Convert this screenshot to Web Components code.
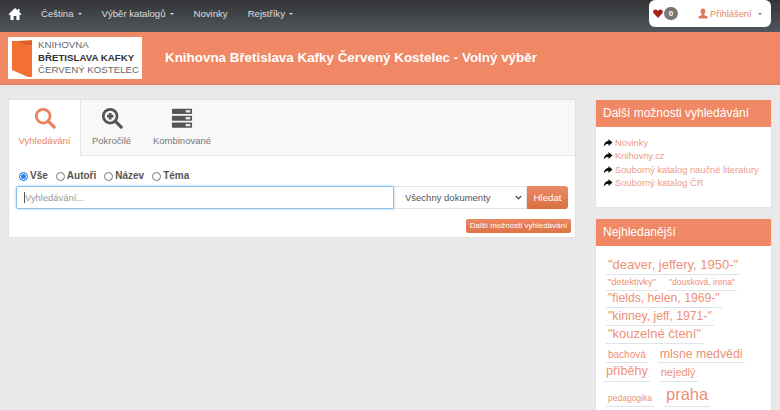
<!DOCTYPE html>
<html lang="cs"><head><meta charset="utf-8"><title>Knihovna</title>
<style>
html,body{margin:0;padding:0;height:410px;overflow:hidden;background:#e9e9e9;font-family:"Liberation Sans",Arial,sans-serif;font-size:10px;color:#555}
x-page{display:block}
</style></head><body>
<template id="t-nav"><style>
:host{display:flex;height:32px;align-items:flex-start;background:linear-gradient(#343537,#50565c);color:#ddd;font-size:9.6px}
.home{width:14px;height:14px;margin:7px 0 0 8px;flex:none}
nav{display:flex;margin-left:19px;line-height:14px;padding-top:7px}
nav span{margin-right:20px;white-space:nowrap}
.c{display:inline-block;width:0;height:0;border:2.5px solid transparent;border-top-color:currentColor;border-bottom:0;margin-left:4px;vertical-align:2px}
.box{margin-left:auto;margin-right:9px;width:122px;height:27px;background:#fff;border-radius:6px;display:flex;align-items:center;box-sizing:border-box;padding:0 0 0 4px;color:#e9866b;font-size:9.4px}
.b{background:#777;color:#fff;border-radius:8px;font-size:8px;font-weight:bold;width:14px;height:13px;line-height:13px;text-align:center;margin-left:1px}
.user{display:flex;align-items:center;margin-left:20px;gap:2px}
.user .c{color:#777;margin-left:4px;vertical-align:0}
</style>
<svg class="home" viewBox="0 0 14 14"><path fill="#fff" d="M7 1 L0.5 7.2 L1.6 8.2 L2.5 7.5 V13 H5.6 V9 H8.4 V13 H11.5 V7.5 L12.4 8.2 L13.5 7.2 L11.5 5.2 V2 H9.8 V3.6Z"/></svg>
<nav><span>Čeština<i class="c"></i></span><span>Výběr katalogů<i class="c"></i></span><span>Novinky</span><span>Rejstříky<i class="c"></i></span></nav>
<div class="box"><svg width="10" height="9" viewBox="0 0 10 9"><path fill="#a3231f" d="M5 9 L.8 4.6 C-.6 3 .2.4 2.5.4 3.7.4 4.5 1 5 1.9 5.5 1 6.3.4 7.5.4 9.8.4 10.6 3 9.2 4.6Z"/></svg><span class="b">0</span>
<span class="user"><svg width="10" height="11" viewBox="0 0 10 11"><path fill="#e0785c" d="M5 .5C6.7.5 7.5 1.8 7.3 3.4 7.2 4.7 6.6 5.700 6.2 6.100V7L9.500 8.500V10.500H.5V8.500L3.800 7V6.100C3.400 5.700 2.800 4.700 2.700 3.400 2.500 1.800 3.300.5 5 .5Z"/></svg><span>Přihlášení</span><i class="c"></i></span></div>
</template>

<template id="t-head"><style>
:host{display:flex;align-items:center;height:53px;box-sizing:border-box;background:#f08866;border-bottom:1px solid #e57f5f;color:#fff;font-weight:bold;font-size:13.4px;padding:5px 0 5px 8px}
.logo{width:134px;height:42px;background:#fff;flex:none;display:flex;align-items:center;gap:6px;padding-left:4px;box-sizing:border-box;color:#666;font-weight:normal;font-size:9.7px;line-height:12.5px}
.logo b{color:#333;font-size:9.7px}
h1{font:inherit;margin:0 0 0 23px;padding-bottom:1px}
</style>
<div class="logo"><svg width="20" height="37" viewBox="0 0 20 37"><path fill="#f36f32" d="M0 1H5L20 0V37H16L0 30Z"/><path fill="#d9602c" d="M5 1 H20 V5 L13 5Z"/></svg><div>KNIHOVNA<br><b>BŘETISLAVA KAFKY</b><br>ČERVENÝ KOSTELEC</div></div>
<h1><slot></slot></h1>
</template>

<template id="t-search"><style>
:host{display:block;width:566px;height:137px;background:#fff;box-sizing:border-box;box-shadow:0 0 1px rgba(0,0,0,.2);flex:none;color:#555}
.tabs{display:flex;height:55px;background:#f8f8f8;border-bottom:1px solid #e6e6e6}
.tab{display:flex;flex-direction:column;align-items:center;color:#777;font-size:9.5px;padding-top:7px;box-sizing:border-box}
.tab svg{width:22px;height:22px;margin-bottom:5px;display:block}
.tab span{line-height:14px;white-space:nowrap}
.on{background:#fff;color:#ea8467;margin-bottom:-1px;width:72px;border-right:1px solid #e6e6e6}
.tab2{width:61px}
.tab3{width:80px}
.radios{display:flex;padding:13px 0 0 10px;font-weight:bold;font-size:10px;line-height:14px;height:14px;gap:8px}
.radios label{display:flex;align-items:center;gap:2px}
.r{width:7px;height:7px;border-radius:50%;border:1px solid #767676;background:#fff;display:inline-block}
.r.c{background:#2e7ee6;border-color:#2e7ee6;box-shadow:inset 0 0 0 1px #fff}
.form{display:flex;margin:3px 0 0 7px;height:23px}
.inp{width:378px;box-sizing:border-box;border:1px solid #8fc0ea;border-radius:2px 0 0 2px;box-shadow:0 0 3px rgba(102,175,233,.6);color:#999;font-size:9.4px;line-height:21px;padding-left:7px;display:flex;align-items:center}
.inp i{width:1px;height:11px;background:#555;display:block}
.sel{width:133px;box-sizing:border-box;border:1px solid #e4e4e4;border-left:0;font-size:9.5px;color:#555;display:flex;align-items:center;padding-left:11px;justify-content:space-between;padding-right:4px}
.sel svg{width:7px;height:5px}
.btn{width:41px;background:linear-gradient(#ec8a66,#d9703f);color:#fff;border-radius:0 3px 3px 0;display:flex;align-items:center;justify-content:center;font-size:9.7px;height:23px}
.more{display:flex;justify-content:flex-end;margin:10px 4px 0 0}
.more span{background:linear-gradient(#ec8762,#dc7446);color:#fff;border-radius:2px;font-size:8px;line-height:14px;height:14px;width:105px;text-align:center;white-space:nowrap}
</style>
<div class="tabs">
<div class="tab on"><svg viewBox="0 0 24 24"><circle cx="10" cy="10" r="7.5" fill="none" stroke="#e9825f" stroke-width="3"/><path d="M15.500 15.500 L22 22" stroke="#e9825f" stroke-width="3.500" stroke-linecap="round"/></svg><span>Vyhledávání</span></div>
<div class="tab tab2"><svg viewBox="0 0 24 24"><circle cx="10" cy="10" r="7.5" fill="none" stroke="#555" stroke-width="3"/><path d="M15.500 15.500 L22 22" stroke="#555" stroke-width="3.500" stroke-linecap="round"/><path d="M10 6.500V13.500M6.500 10H13.500" stroke="#555" stroke-width="3"/></svg><span>Pokročilé</span></div>
<div class="tab tab3"><svg viewBox="0 0 24 24"><g fill="#555"><rect x="1" y="2" width="22" height="5.500" rx="1"/><rect x="1" y="9.500" width="22" height="5.500" rx="1"/><rect x="1" y="17" width="22" height="5.500" rx="1"/></g><g fill="#eee"><rect x="16" y="3.500" width="5" height="2.500"/><rect x="16" y="11" width="5" height="2.500"/><rect x="16" y="18.500" width="5" height="2.500"/></g></svg><span>Kombinované</span></div>
</div>
<div class="radios"><label><i class="r c"></i>Vše</label><label><i class="r"></i>Autoři</label><label><i class="r"></i>Název</label><label><i class="r"></i>Téma</label></div>
<div class="form"><div class="inp"><i></i>Vyhledávání...</div><div class="sel">Všechny dokumenty<svg viewBox="0 0 7 5"><path d="M.8 1 L3.500 3.800 6.200 1" fill="none" stroke="#555" stroke-width="1.300"/></svg></div><div class="btn">Hledat</div></div>
<div class="more"><span>Další možnosti vyhledávání</span></div>
</template>

<template id="t-panel"><style>
:host{display:block;background:#fff;box-shadow:0 0 1px rgba(0,0,0,.15)}
h2{margin:0;background:#f08866;color:#fff;font-weight:normal;font-size:12px;height:27px;line-height:26px;padding-left:7px}
</style><h2><slot name="h"></slot></h2><slot></slot></template>

<template id="t-links"><style>
:host{display:block;padding:10px 0 16px 7px;font-size:9.3px;color:#ee9c85;line-height:13.4px}
div{display:flex;align-items:center;gap:2px;white-space:nowrap}
svg{width:10px;height:8px;flex:none;margin-top:-2px}
</style>
<div><svg viewBox="0 0 9 8"><path d="M5 0 9 3.500 5 7V5C3 5 1.500 5.500.3 7.500.3 4.500 2 2 5 2Z" fill="#111"/></svg>Novinky</div>
<div><svg viewBox="0 0 9 8"><path d="M5 0 9 3.500 5 7V5C3 5 1.500 5.500.3 7.500.3 4.500 2 2 5 2Z" fill="#111"/></svg>Knihovny.cz</div>
<div><svg viewBox="0 0 9 8"><path d="M5 0 9 3.500 5 7V5C3 5 1.500 5.500.3 7.500.3 4.500 2 2 5 2Z" fill="#111"/></svg>Souborný katalog naučné literatury</div>
<div><svg viewBox="0 0 9 8"><path d="M5 0 9 3.500 5 7V5C3 5 1.500 5.500.3 7.500.3 4.500 2 2 5 2Z" fill="#111"/></svg>Souborný katalog ČR</div>
</template>

<template id="t-tags"><style>
:host{display:block;padding:11px 0 0 10px;color:#ed9078}
.row{display:flex;align-items:flex-end;gap:10px;white-space:nowrap}
span{border-bottom:1px solid #dfe3e8;padding:0 2px 2px;display:block;line-height:14px}
</style>
<div class="row" style="height:18px"><span style="font-size:13px">"deaver, jeffery, 1950-"</span></div>
<div class="row" style="height:16px"><span style="font-size:9.3px;line-height:12px">"detektivky"</span><span style="font-size:8.5px;line-height:12px;margin-left:-1px">"dousková, irena"</span></div>
<div class="row" style="height:17px"><span style="font-size:12.2px">"fields, helen, 1969-"</span></div>
<div class="row" style="height:18px"><span style="font-size:12.2px">"kinney, jeff, 1971-"</span></div>
<div class="row" style="height:18px"><span style="font-size:13px">"kouzelné čtení"</span></div>
<div class="row" style="height:19px"><span style="font-size:10px;line-height:12px;padding-bottom:1px">bachová</span><span style="font-size:12.3px;padding-bottom:1px">mlsne medvědi</span></div>
<div class="row" style="height:19px;margin-left:-2px"><span style="font-size:12.5px;padding-bottom:3px">příběhy</span><span style="font-size:11px;padding-bottom:2px;margin-left:-1px">nejedlý</span></div>
<div class="row" style="height:25px"><span style="font-size:8.5px;line-height:12px">pedagogika</span><span style="font-size:16.5px;line-height:18px;padding-bottom:3px">praha</span></div>
</template>

<template id="t-page"><style>
:host{display:block}
main{display:flex;padding:15px 9px 0;gap:21px;align-items:flex-start}
aside{width:175px;flex:none;display:flex;flex-direction:column;gap:12px}
</style>
<x-nav></x-nav><x-head>Knihovna Břetislava Kafky Červený Kostelec - Volný výběr</x-head>
<main><x-search></x-search><aside>
<x-panel><span slot="h">Další možnosti vyhledávání</span><x-links></x-links></x-panel>
<x-panel style="height:200px"><span slot="h">Nejhledanější</span><x-tags></x-tags></x-panel>
</aside></main></template>
<x-page></x-page>
<script>
for (const [n,t] of [['x-nav','t-nav'],['x-head','t-head'],['x-search','t-search'],['x-panel','t-panel'],['x-links','t-links'],['x-tags','t-tags'],['x-page','t-page']]) {
  customElements.define(n, class extends HTMLElement {
    constructor(){super();this.attachShadow({mode:'open'}).appendChild(document.getElementById(t).content.cloneNode(true));}
  });
}
</script>
</body></html>
